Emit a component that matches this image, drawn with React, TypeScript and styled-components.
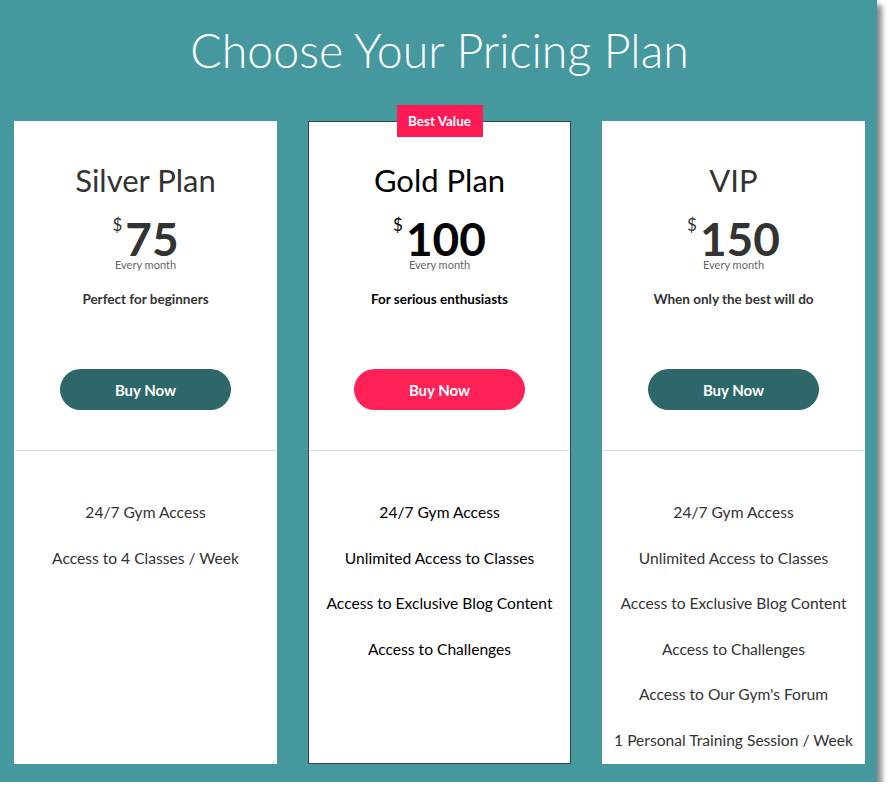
import styled, { createGlobalStyle } from 'styled-components'

const GlobalStyle = createGlobalStyle`
  body {
    margin: 0;
    background: #ffffff;
    font-family: 'Lato', 'Open Sans', sans-serif;
  }
`

type Plan = {
  name: string
  price: string
  tagline: string
  features: string[]
  featured?: boolean
}

const plans: Plan[] = [
  {
    name: 'Silver Plan',
    price: '75',
    tagline: 'Perfect for beginners',
    features: ['24/7 Gym Access', 'Access to 4 Classes / Week'],
  },
  {
    name: 'Gold Plan',
    price: '100',
    tagline: 'For serious enthusiasts',
    featured: true,
    features: [
      '24/7 Gym Access',
      'Unlimited Access to Classes',
      'Access to Exclusive Blog Content',
      'Access to Challenges',
    ],
  },
  {
    name: 'VIP',
    price: '150',
    tagline: 'When only the best will do',
    features: [
      '24/7 Gym Access',
      'Unlimited Access to Classes',
      'Access to Exclusive Blog Content',
      'Access to Challenges',
      "Access to Our Gym's Forum",
      '1 Personal Training Session / Week',
    ],
  },
]

const Panel = styled.section`
  width: 877px;
  height: 782px;
  box-sizing: border-box;
  background: #45989e;
  box-shadow: 5px 5px 5px rgba(0, 0, 0, 0.45);
  padding: 0 12px 0 14px;
`

const Heading = styled.h1`
  margin: 0;
  padding-top: 24px;
  height: 97px;
  box-sizing: border-box;
  text-align: center;
  color: #ffffff;
  font-size: 46.5px;
  font-weight: 300;
  line-height: 52px;
`

const CardRow = styled.div`
  display: grid;
  grid-template-columns: repeat(3, 263px);
  column-gap: 31px;
  margin-top: 24px;
`

const Card = styled.article<{ $featured?: boolean }>`
  position: relative;
  height: 643px;
  box-sizing: border-box;
  background: #ffffff;
  border: 1px solid ${(p) => (p.$featured ? '#2c4a4e' : 'transparent')};
  color: ${(p) => (p.$featured ? '#000000' : '#333333')};
  display: flex;
  flex-direction: column;
`

const Badge = styled.div`
  position: absolute;
  top: -17px;
  left: 50%;
  transform: translateX(-50%);
  width: 86px;
  height: 32px;
  display: flex;
  align-items: center;
  justify-content: center;
  background: #ff1a55;
  color: #ffffff;
  font-size: 13.5px;
  font-weight: 700;
`

const Top = styled.div`
  height: 328px;
  display: flex;
  flex-direction: column;
  align-items: center;
  border-bottom: 1px solid #dddddd;
`

const PlanName = styled.h2`
  margin: 40px 0 0;
  font-size: 31px;
  font-weight: 400;
  line-height: 36px;
`

const PriceRow = styled.div`
  display: flex;
  align-items: flex-start;
  margin-top: 22px;
  line-height: 1;
`

const Currency = styled.span`
  font-size: 17px;
  margin-top: -4px;
  margin-right: 3px;
`

const Amount = styled.span`
  font-size: 46px;
  font-weight: 700;
  line-height: 38px;
`

const Period = styled.div`
  font-size: 11px;
  color: #666666;
  line-height: 14px;
`

const Tagline = styled.p`
  margin: 19px 0 0;
  font-size: 13.5px;
  font-weight: 700;
  line-height: 16px;
`

const BuyButton = styled.button<{ $featured?: boolean }>`
  margin-top: 62px;
  width: 171px;
  height: 41px;
  border: none;
  border-radius: 21px;
  background: ${(p) => (p.$featured ? '#ff2056' : '#2d6769')};
  color: #ffffff;
  font-family: inherit;
  font-size: 15px;
  font-weight: 700;
  cursor: pointer;
`

const FeatureList = styled.ul`
  list-style: none;
  margin: 0;
  padding: 51px 0 0;
  display: flex;
  flex-direction: column;
  align-items: center;
  gap: 25.6px;
`

const Feature = styled.li`
  font-size: 15.6px;
  line-height: 20px;
`

export default function App() {
  return (
    <>
      <GlobalStyle />
      <Panel>
        <Heading>Choose Your Pricing Plan</Heading>
        <CardRow>
          {plans.map((plan) => (
            <Card key={plan.name} $featured={plan.featured}>
              {plan.featured && <Badge>Best Value</Badge>}
              <Top>
                <PlanName>{plan.name}</PlanName>
                <PriceRow>
                  <Currency>$</Currency>
                  <Amount>{plan.price}</Amount>
                </PriceRow>
                <Period>Every month</Period>
                <Tagline>{plan.tagline}</Tagline>
                <BuyButton $featured={plan.featured}>Buy Now</BuyButton>
              </Top>
              <FeatureList>
                {plan.features.map((f) => (
                  <Feature key={f}>{f}</Feature>
                ))}
              </FeatureList>
            </Card>
          ))}
        </CardRow>
      </Panel>
    </>
  )
}
